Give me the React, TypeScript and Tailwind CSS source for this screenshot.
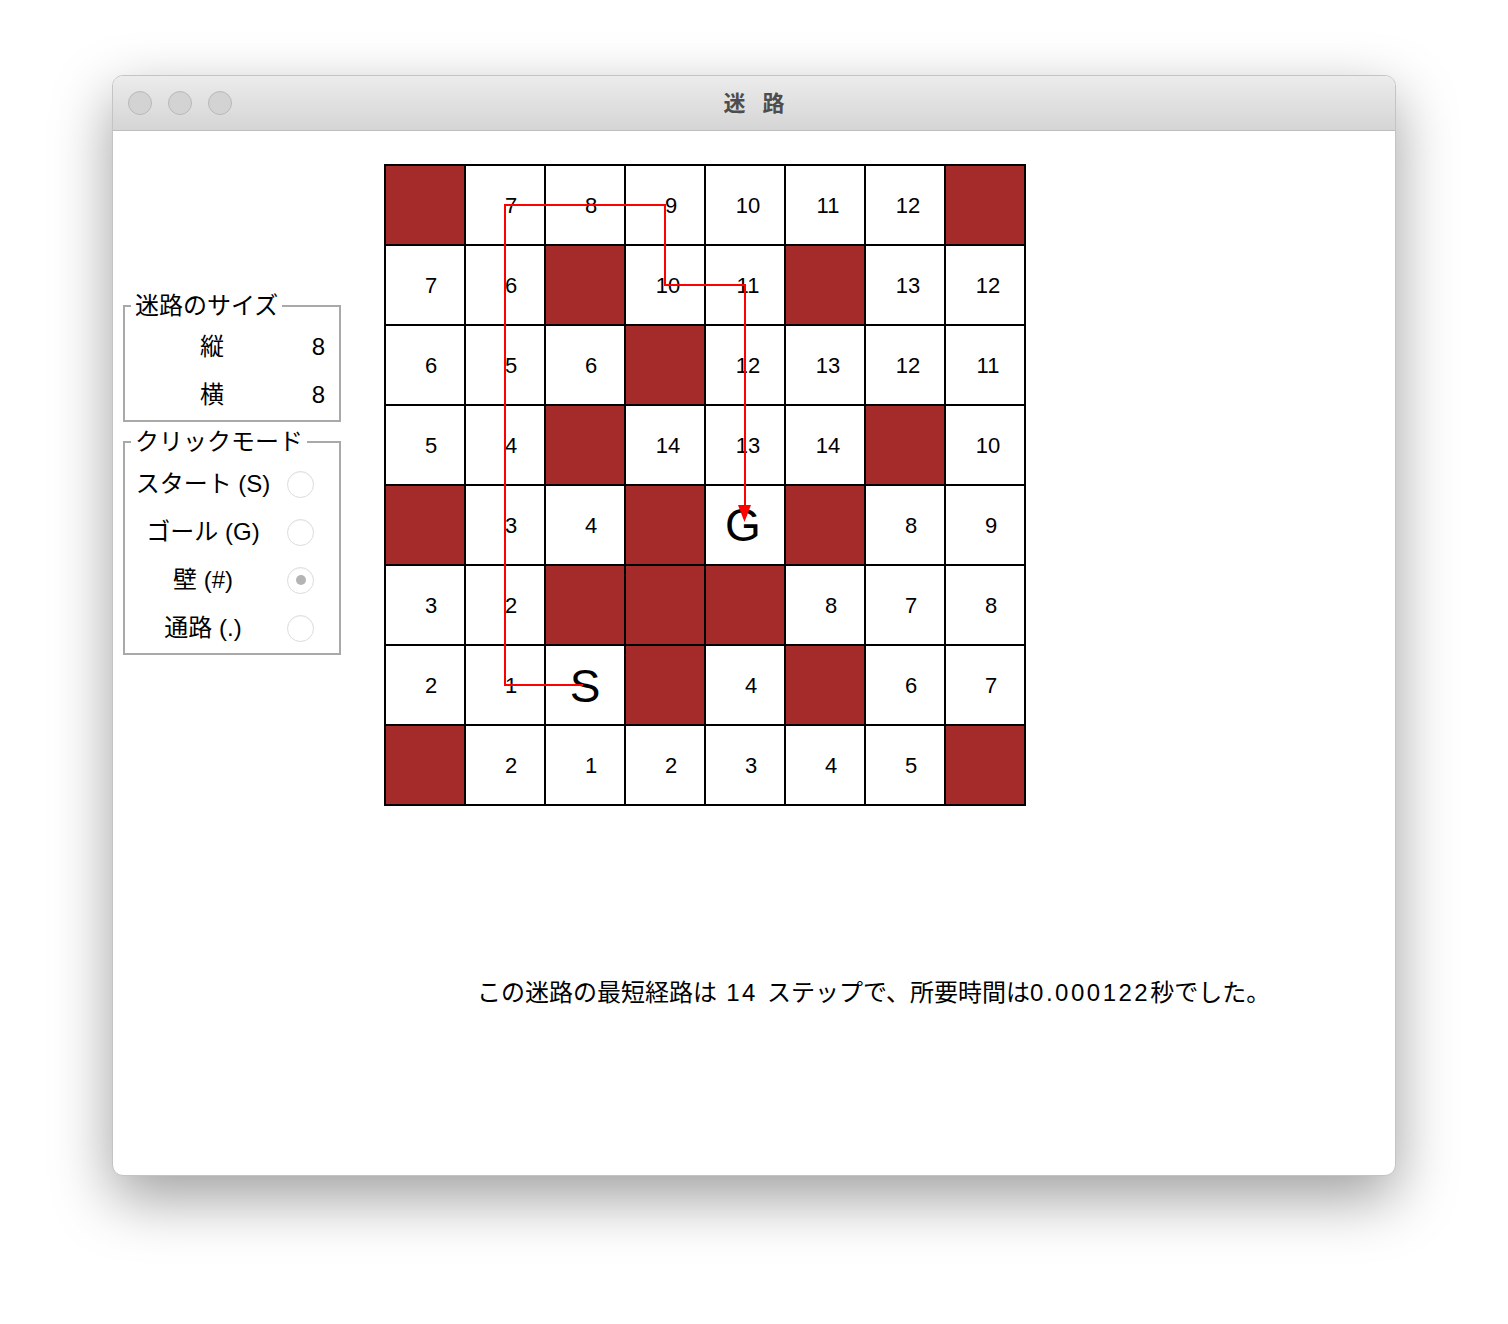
import { type ReactNode } from 'react'

const maze = [
  ['#', '7', '8', '9', '10', '11', '12', '#'],
  ['7', '6', '#', '10', '11', '#', '13', '12'],
  ['6', '5', '6', '#', '12', '13', '12', '11'],
  ['5', '4', '#', '14', '13', '14', '#', '10'],
  ['#', '3', '4', '#', 'G', '#', '8', '9'],
  ['3', '2', '#', '#', '#', '8', '7', '8'],
  ['2', '1', 'S', '#', '4', '#', '6', '7'],
  ['#', '2', '1', '2', '3', '4', '5', '#'],
]

const modes = [
  { label: 'スタート (S)', checked: false },
  { label: 'ゴール (G)', checked: false },
  { label: '壁 (#)', checked: true },
  { label: '通路 (.)', checked: false },
]

function Group({ title, className, children }: { title: string; className?: string; children: ReactNode }) {
  return (
    <fieldset className={`w-[218px] border-2 border-[#a9a9a9] pb-[1px] ${className ?? ''}`}>
      <legend className="ml-[6px] px-[4px] text-[24px] leading-[28px] text-black">{title}</legend>
      {children}
    </fieldset>
  )
}

function Radio({ checked }: { checked: boolean }) {
  return (
    <span className="flex h-[27px] w-[27px] items-center justify-center rounded-full border border-[#dcdcdc] bg-white shadow-[inset_0_1px_1px_rgba(0,0,0,0.04)]">
      {checked ? <span className="h-[10px] w-[10px] rounded-full bg-[#b4b4b4]" /> : null}
    </span>
  )
}

function Cell({ value }: { value: string }) {
  if (value === '#') return <div className="h-[78px] w-[78px] bg-[#a52a2a]" />
  if (value === 'S' || value === 'G') {
    return (
      <div className="flex h-[78px] w-[78px] items-center justify-center bg-white">
        <span className={`text-[46px] leading-none text-black ${value === 'G' ? 'mr-[4px]' : 'mt-[2px]'}`}>{value}</span>
      </div>
    )
  }
  return (
    <div
      className={`flex h-[78px] w-[78px] items-center justify-center bg-white text-[22px] text-black ${
        value.length === 1 ? 'pl-[12px]' : 'pl-[6px]'
      }`}
    >
      {value}
    </div>
  )
}

export default function App() {
  return (
    <div className="h-[1324px] w-[1508px] bg-white pl-[112px] pt-[75px] font-['Liberation_Sans','Noto_Sans_CJK_JP',sans-serif]">
      <div className="h-[1101px] w-[1284px] overflow-hidden rounded-[11px] border border-[#c4c4c4] bg-white shadow-[0_22px_60px_rgba(0,0,0,0.38)]">
        <div className="relative flex h-[55px] items-center border-b border-[#bdbdbd] bg-gradient-to-b from-[#ececec] to-[#d5d5d5] pl-[15px]">
          <div className="flex gap-[16px]">
            <span className="h-[24px] w-[24px] rounded-full border border-[#b9b9b9] bg-[#d3d3d3]" />
            <span className="h-[24px] w-[24px] rounded-full border border-[#b9b9b9] bg-[#d3d3d3]" />
            <span className="h-[24px] w-[24px] rounded-full border border-[#b9b9b9] bg-[#d3d3d3]" />
          </div>
          <div className="absolute inset-x-0 top-0 flex h-full items-center justify-center gap-[17px] text-[22px] font-bold text-[#4d4d4d]">
            <span>迷</span>
            <span>路</span>
          </div>
        </div>

        <div className="flex flex-col">
          <div className="flex">
            <div className="ml-[10px] mt-[161px] flex flex-col">
              <Group title="迷路のサイズ">
                <div className="pt-[3px]">
                  <div className="flex h-[48px] items-center text-[24px]">
                    <span className="w-[174px] text-center">縦</span>
                    <span className="flex-1 pr-[14px] text-right">8</span>
                  </div>
                  <div className="flex h-[48px] items-center text-[24px]">
                    <span className="w-[174px] text-center">横</span>
                    <span className="flex-1 pr-[14px] text-right">8</span>
                  </div>
                </div>
              </Group>
              <Group title="クリックモード" className="mt-[6px]">
                <div className="pt-[4px]">
                  {modes.map((m) => (
                    <div key={m.label} className="flex h-[48px] items-center text-[24px]">
                      <span className="w-[156px] text-center">{m.label}</span>
                      <span className="ml-[6px]">
                        <Radio checked={m.checked} />
                      </span>
                    </div>
                  ))}
                </div>
              </Group>
            </div>

            <div className="relative ml-[43px] mt-[33px]">
              <div className="grid w-[642px] grid-cols-8 gap-[2px] bg-black p-[2px]">
                {maze.flatMap((row, r) => row.map((v, c) => <Cell key={`${r}-${c}`} value={v} />))}
              </div>
              <svg className="pointer-events-none absolute left-0 top-0" width="642" height="642">
                <polyline
                  points="199,521 121,521 121,41 281,41 281,121 361,121 361,343"
                  fill="none"
                  stroke="#ff0000"
                  strokeWidth="2"
                />
                <polygon points="354,341 367,341 360.5,358" fill="#ff0000" />
              </svg>
            </div>
          </div>

          <div className="ml-[364px] mt-[171px] text-[24px] leading-[32px] text-black">
            この迷路の最短経路は<span className="tracking-[2.5px]"> 14 </span>ステップで、所要時間は
            <span className="tracking-[2.5px]">0.000122</span>秒でした。
          </div>
        </div>
      </div>
    </div>
  )
}
